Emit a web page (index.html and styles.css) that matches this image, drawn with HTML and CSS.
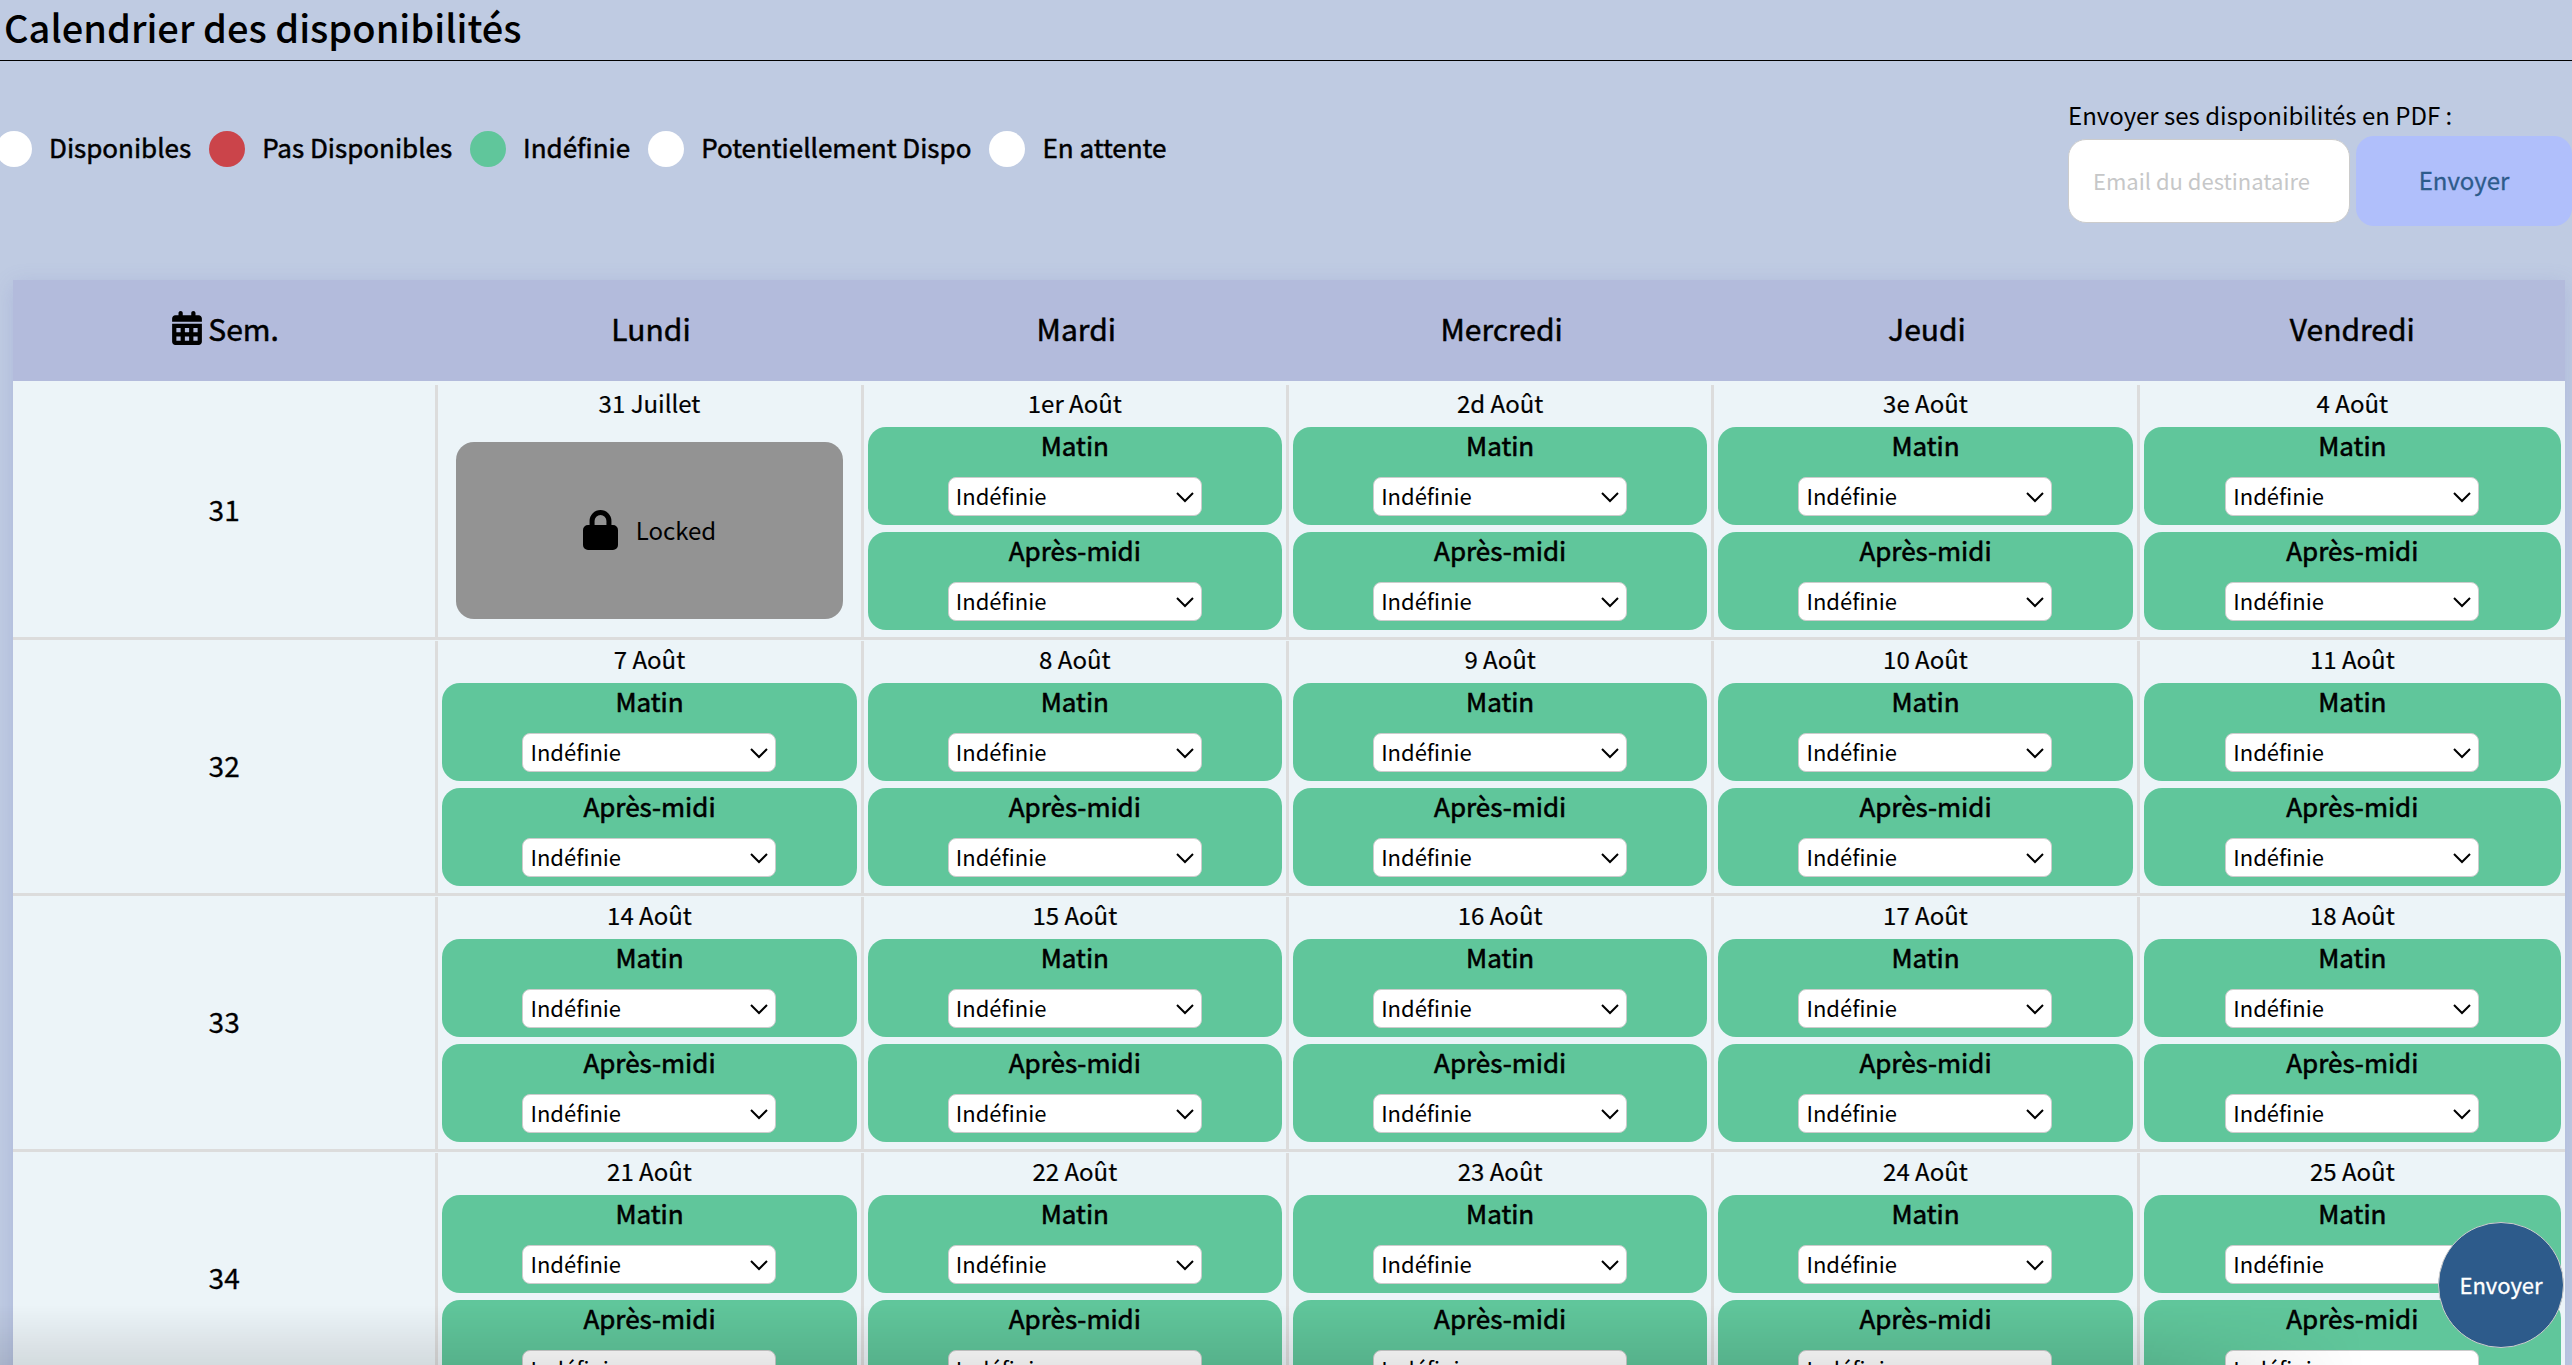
FILE: index.html
```html
<!DOCTYPE html>
<html lang="fr">
<head>
<meta charset="utf-8">
<title>Calendrier des disponibilités</title>
<link rel="stylesheet" href="styles.css">
</head>
<body>
<header class="page-header"><h1>Calendrier des disponibilités</h1></header>
<section class="toolbar">
  <ul class="legend">
    <li><span class="dot"></span><span class="legend-text">Disponibles</span></li>
    <li><span class="dot dot-no"></span><span class="legend-text">Pas Disponibles</span></li>
    <li><span class="dot dot-undef"></span><span class="legend-text">Indéfinie</span></li>
    <li><span class="dot"></span><span class="legend-text">Potentiellement Dispo</span></li>
    <li><span class="dot"></span><span class="legend-text">En attente</span></li>
  </ul>
  <form class="send">
    <label for="email">Envoyer ses disponibilités en PDF :</label>
    <div class="send-row">
      <input id="email" type="email" placeholder="Email du destinataire">
      <button type="button" class="send-btn">Envoyer</button>
    </div>
  </form>
</section>
<table class="calendar">
  <thead>
    <tr>
      <th scope="col"><svg class="cal-icon" viewBox="0 0 448 512" aria-hidden="true"><path fill-rule="evenodd" d="M128 0c17.700 0 32 14.300 32 32V64H288V32c0-17.700 14.300-32 32-32s32 14.300 32 32V64h48c26.500 0 48 21.500 48 48v48H0V112C0 85.500 21.500 64 48 64H96V32c0-17.700 14.300-32 32-32zM0 192H448V464c0 26.500-21.500 48-48 48H48c-26.500 0-48-21.500-48-48V192zM64 256v64h64v-64zM192 256v64h64v-64zM320 256v64h64v-64zM64 384v64h64v-64zM192 384v64h64v-64zM320 384v64h64v-64z"/></svg>Sem.</th>
      <th scope="col">Lundi</th><th scope="col">Mardi</th><th scope="col">Mercredi</th><th scope="col">Jeudi</th><th scope="col">Vendredi</th>
    </tr>
  </thead>
  <tbody id="weeks"></tbody>
</table>
<button type="button" class="fab">Envoyer</button>
<div class="bottom-shade"></div>
<script src="calendar.js"></script>
</body>
</html>
```
FILE: styles.css
```css
* { box-sizing: border-box; }
html, body { height: 100%; }
body {
  margin: 0;
  overflow: hidden;
  background: #bfcbe2;
  color: #000;
  font: 24px/36px "Noto Sans CJK JP", "Noto Sans", sans-serif;
}
button, input, select { font-family: inherit; color: inherit; }
h1 { margin: 0; padding: 0 4px 6px; font-size: 38px; line-height: 54px; font-weight: 500; }
.page-header { border-bottom: 1px solid #000; }
.toolbar { display: flex; justify-content: space-between; align-items: flex-start; height: 219px; padding-top: 36px; }
.legend {
  display: flex;
  gap: 18px;
  margin: 32px 0 0 -4px;
  padding: 0;
  list-style: none;
  font-size: 26px;
}
.legend li { display: flex; align-items: center; gap: 17px; }
.legend-text { padding-bottom: 3px; -webkit-text-stroke: 0.5px; }
.dot { width: 36px; height: 36px; border-radius: 50%; background: #fff; }
.dot-no { background: #cb444a; }
.dot-undef { background: #60c69b; }
.send label { display: block; padding-bottom: 3px; }
.send-row { display: flex; align-items: center; gap: 6px; }
.send input {
  width: 282px;
  height: 84px;
  padding: 0 24px 2px;
  border: 1px solid #ccc;
  border-radius: 18px;
  background: #fff;
  font-size: 22px;
}
.send input::placeholder { color: #c6c7c8; opacity: 1; }
.send-btn { width: 216px; height: 90px; padding: 0 0 3px; border: 0; border-radius: 18px; background: #b0bffb; color: #2d5b8b; font-size: 24px; -webkit-text-stroke: 0.3px; }
.calendar {
  width: calc(100% - 20px);
  margin-left: 13px;
  table-layout: fixed;
  border-collapse: separate;
  border-spacing: 0;
  background: #ecf4f8;
  box-shadow: 0 4px 20px rgba(100, 110, 190, 0.2);
}
.calendar thead th { height: 104px; padding: 0 0 6px; border-bottom: 3px solid #ecf4f8; background: #b3bbdc; font-size: 30px; font-weight: 400; -webkit-text-stroke: 0.5px; }
.cal-icon { width: 30px; height: 34px; margin-right: 6px; vertical-align: -4px; }
.calendar tbody th, .calendar td {
  height: 256px;
  border-bottom: 3px solid #dcdcdc;
  background: linear-gradient(#dcdcdc, #dcdcdc) right 1px / 3px 100% no-repeat;
}
.calendar tbody th { padding: 0 3px 4px 0; font-size: 28px; font-weight: 400; -webkit-text-stroke: 0.3px; }
.calendar td { padding: 1px 7px 7px 4px; vertical-align: top; text-align: center; }
.calendar td:last-child { padding-right: 4px; background: none; }
.date { margin-bottom: 6px; -webkit-text-stroke: 0.2px; }
.slot { height: 98px; border-radius: 18px; background: #60c69b; font-size: 26px; }
.slot + .slot { margin-top: 7px; }
.slot label { display: block; height: 50px; line-height: 36px; -webkit-text-stroke: 0.6px; }
.slot select {
  display: block;
  width: 254px;
  height: 39px;
  margin: 0 auto;
  padding: 0 7px 4px;
  border: 1px solid #ccc;
  border-radius: 8px;
  appearance: none;
  background: #fff url("data:image/svg+xml,%3Csvg xmlns='http://www.w3.org/2000/svg' viewBox='0 0 20 12'%3E%3Cpath d='M2 2l8 8 8-8' fill='none' stroke='%23000' stroke-width='2'/%3E%3C/svg%3E") right 6px center / 20px 12px no-repeat;
  font-size: 22px;
}
.locked { display: flex; align-items: center; justify-content: center; gap: 18px; height: 177px; margin: 21px 14px 0; border-radius: 18px; background: #939393; }
.locked-text { padding-bottom: 2px; }
.lock-icon { width: 35px; height: 40px; margin-bottom: 2px; }
.fab { position: fixed; right: 8px; bottom: 17px; width: 126px; height: 126px; padding: 0 0 3px; border: 1px solid #ccc; border-radius: 50%; background: #2d5b8b; color: #fff; font-size: 22px; -webkit-text-stroke: 0.3px; }
.bottom-shade {
  position: fixed;
  left: 0;
  right: 0;
  bottom: 0;
  height: 60px;
  pointer-events: none;
  background: linear-gradient(transparent, rgba(0, 0, 0, 0.1));
  mask-image: linear-gradient(90deg, #000 83%, transparent 92%);
}
```
FILE: calendar.js
```js
const weeks = [
  [31, ["31 Juillet", "1er Août", "2d Août", "3e Août", "4 Août"]],
  [32, ["7 Août", "8 Août", "9 Août", "10 Août", "11 Août"]],
  [33, ["14 Août", "15 Août", "16 Août", "17 Août", "18 Août"]],
  [34, ["21 Août", "22 Août", "23 Août", "24 Août", "25 Août"]]
];
const lockedDays = ["31 Juillet"];
const lock = '<div class="locked"><svg class="lock-icon" viewBox="0 0 448 512" aria-hidden="true"><path fill-rule="evenodd" d="M84 192V140a140 140 0 0 1 280 0V192h20a64 64 0 0 1 64 64V448a64 64 0 0 1-64 64H64a64 64 0 0 1-64-64V256a64 64 0 0 1 64-64zM148 192H300V140a76 76 0 0 0-152 0z"/></svg><span class="locked-text">Locked</span></div>';
const slot = (name, id) =>
  `<div class="slot"><label for="${id}">${name}</label><select id="${id}"><option>Indéfinie</option><option>Disponible</option><option>Pas Disponible</option></select></div>`;

document.getElementById("weeks").innerHTML = weeks.map(([week, days]) =>
  `<tr><th scope="row">${week}</th>` + days.map((day, i) =>
    `<td><div class="date">${day}</div>` +
    (lockedDays.includes(day) ? lock : slot("Matin", `am-${week}-${i}`) + slot("Après-midi", `pm-${week}-${i}`)) +
    "</td>").join("") + "</tr>").join("");
```
